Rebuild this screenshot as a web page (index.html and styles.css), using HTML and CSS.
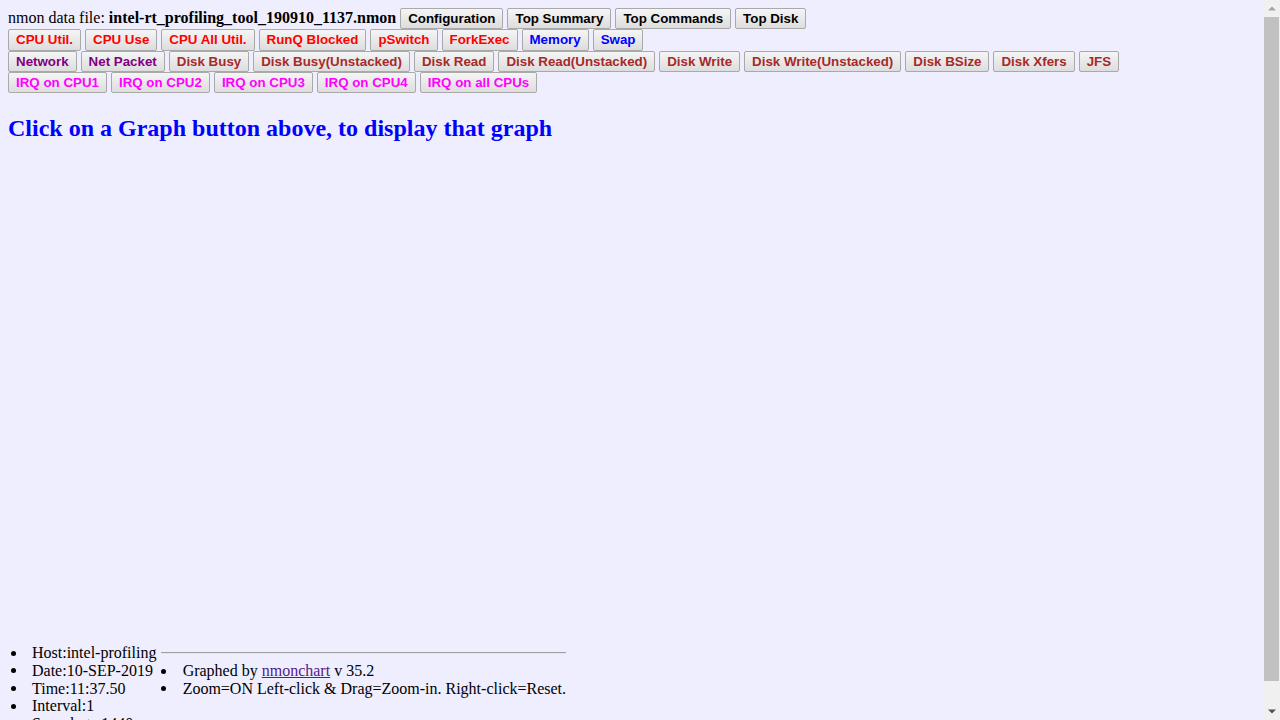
FILE: index.html
```html
<!DOCTYPE html>
<html lang="en">
<head>
<meta charset="utf-8">
<title>nmonchart - intel-rt_profiling_tool_190910_1137.nmon</title>
<link rel="stylesheet" href="styles.css">
</head>
<body>
<div class="viewport">
<div class="toolbar">
  <div class="row">
    <span class="file">nmon data file: <b>intel-rt_profiling_tool_190910_1137.nmon</b></span>
    <button class="btn c-black">Configuration</button>
    <button class="btn c-black">Top Summary</button>
    <button class="btn c-black">Top Commands</button>
    <button class="btn c-black">Top Disk</button>
  </div>
  <div class="row">
    <button class="btn c-red">CPU Util.</button>
    <button class="btn c-red">CPU Use</button>
    <button class="btn c-red">CPU All Util.</button>
    <button class="btn c-red">RunQ Blocked</button>
    <button class="btn c-red">pSwitch</button>
    <button class="btn c-red">ForkExec</button>
    <button class="btn c-blue">Memory</button>
    <button class="btn c-blue">Swap</button>
  </div>
  <div class="row">
    <button class="btn c-purple">Network</button>
    <button class="btn c-purple">Net Packet</button>
    <button class="btn c-brown">Disk Busy</button>
    <button class="btn c-brown">Disk Busy(Unstacked)</button>
    <button class="btn c-brown">Disk Read</button>
    <button class="btn c-brown">Disk Read(Unstacked)</button>
    <button class="btn c-brown">Disk Write</button>
    <button class="btn c-brown">Disk Write(Unstacked)</button>
    <button class="btn c-brown">Disk BSize</button>
    <button class="btn c-brown">Disk Xfers</button>
    <button class="btn c-brown">JFS</button>
  </div>
  <div class="row">
    <button class="btn c-magenta">IRQ on CPU1</button>
    <button class="btn c-magenta">IRQ on CPU2</button>
    <button class="btn c-magenta">IRQ on CPU3</button>
    <button class="btn c-magenta">IRQ on CPU4</button>
    <button class="btn c-magenta">IRQ on all CPUs</button>
  </div>
</div>

<div class="graph">
  <h2 class="prompt">Click on a Graph button above, to display that graph</h2>
</div>

<div class="info">
  <ul class="list meta">
    <li>Host:intel-profiling</li>
    <li>Date:10-SEP-2019</li>
    <li>Time:11:37.50</li>
    <li>Interval:1</li>
    <li>Snapshots:1440</li>
  </ul>
  <div class="credits">
    <hr class="rule">
    <ul class="list about">
      <li>Graphed by <a class="link" href="#">nmonchart</a> v 35.2</li>
      <li>Zoom=ON Left-click &amp; Drag=Zoom-in. Right-click=Reset.</li>
    </ul>
  </div>
</div>
</div>

<div class="scrollbar" aria-hidden="true">
  <div class="sb-btn">
    <svg width="8" height="5" viewBox="0 0 8 5"><path d="M0 4.5 L4 0.5 L8 4.5 Z" fill="#a3a3a3"/></svg>
  </div>
  <div class="sb-track"><div class="sb-thumb"></div></div>
  <div class="sb-btn">
    <svg width="8" height="5" viewBox="0 0 8 5"><path d="M0 0.5 L4 4.5 L8 0.5 Z" fill="#505050"/></svg>
  </div>
</div>
</body>
</html>
```

FILE: styles.css
```css
html,
body {
  margin: 0;
  height: 100%;
  background: #eeeeff;
}

body {
  display: flex;
  font-family: "Liberation Serif", "Times New Roman", serif;
  font-size: 16px;
  line-height: 1.107;
  color: #000;
  overflow: hidden;
}

.viewport {
  flex: 1;
  box-sizing: border-box;
  height: 100vh;
  padding: 8px;
  overflow-y: auto;
  scrollbar-width: none;
}

.viewport::-webkit-scrollbar {
  display: none;
}

/* ---------- button bar ---------- */
.toolbar {
  display: flex;
  flex-direction: column;
}

.row {
  display: flex;
  align-items: baseline;
  gap: 4px;
}

.file {
  white-space: nowrap;
}

.btn {
  margin: 0;
  padding: 2px 7px;
  font: bold 13.333px/15.33px "Liberation Sans", Arial, sans-serif;
  border: 1px solid #a9a9a9;
  border-radius: 2px;
  background: linear-gradient(#f5f5f5, #dddddd);
  white-space: nowrap;
}

.c-black { color: #000000; }
.c-red { color: #ff0000; }
.c-blue { color: #0000ff; }
.c-purple { color: #800080; }
.c-brown { color: #a52a2a; }
.c-magenta { color: #ff00ff; }

/* ---------- graph area ---------- */
.graph {
  box-sizing: border-box;
  height: 550.8px;
  padding-top: 21.5px;
}

.prompt {
  margin: 0;
  font-size: 24px;
  font-weight: bold;
  line-height: 1.107;
  color: #0000ff;
}

/* ---------- info footer ---------- */
.info {
  display: flex;
  align-items: flex-start;
  padding-bottom: 16px;
}

.list {
  margin: 0;
  padding-left: 24px;
  list-style: none;
}

.list li {
  white-space: nowrap;
}

.list li::before {
  content: "";
  display: inline-block;
  width: 5px;
  height: 5px;
  border-radius: 50%;
  background: #000;
  margin-left: -21.5px;
  margin-right: 16.5px;
  vertical-align: 2.5px;
}

.credits {
  margin-left: 4.5px;
}

.about {
  padding-left: 21.7px;
}

.rule {
  height: 0;
  margin: 8px 0;
  border: 0;
  border-top: 1px solid #a0a0a0;
  border-bottom: 1px solid #e4e4ef;
}

.link {
  color: #551a8b;
}

/* ---------- window scrollbar (decorative) ---------- */
.scrollbar {
  flex: 0 0 17px;
  display: flex;
  flex-direction: column;
  height: 100vh;
  background: #f0f0f0;
}

.sb-btn {
  flex: 0 0 17px;
  display: flex;
  align-items: center;
  justify-content: center;
}

.sb-track {
  flex: 1;
  display: flex;
  flex-direction: column;
}

.sb-thumb {
  height: 664px;
  margin: 0 1px 0 1px;
  background: #c1c1c1;
}
```
